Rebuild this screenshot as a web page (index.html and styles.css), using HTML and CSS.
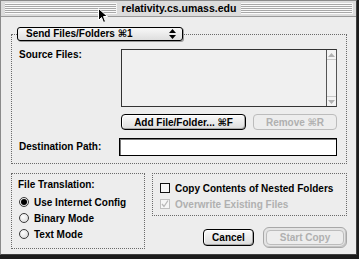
FILE: index.html
```html
<!DOCTYPE html>
<html lang="en">
<head>
    <meta charset="UTF-8">
    <title>relativity.cs.umass.edu</title>
    <link rel="stylesheet" href="styles.css">
</head>
<body>
    <div class="window">
        <div class="titlebar">
            <div class="grip"></div>
            <div class="title">relativity.cs.umass.edu</div>
            <div class="grip"></div>
        </div>

        <div class="content">
            <div class="group send">
                <div class="popup">
                    <span>Send Files/Folders &#8984;1</span>
                    <svg class="popup-arrows" width="7" height="10" viewBox="0 0 7 10">
                        <path d="M3.5 0 L7 4 L0 4 Z M0 6 L7 6 L3.5 10 Z" fill="#000"/>
                    </svg>
                </div>

                <div class="send-grid">
                    <div class="label top">Source Files:</div>
                    <div class="list">
                        <div class="list-area"></div>
                        <div class="scroll">
                            <div class="scroll-btn">
                                <svg width="7" height="4" viewBox="0 0 7 4"><path d="M3.5 0 L7 4 L0 4 Z" fill="#b0b0b0"/></svg>
                            </div>
                            <div class="scroll-track"></div>
                            <div class="scroll-btn">
                                <svg width="7" height="4" viewBox="0 0 7 4"><path d="M0 0 L7 0 L3.5 4 Z" fill="#b0b0b0"/></svg>
                            </div>
                        </div>
                    </div>

                    <div></div>
                    <div class="list-buttons">
                        <button class="btn add">Add File/Folder... &#8984;F</button>
                        <button class="btn remove" disabled>Remove &#8984;R</button>
                    </div>

                    <div class="label">Destination Path:</div>
                    <div class="field"></div>
                </div>
            </div>

            <div class="lower">
                <div class="group translation">
                    <div class="label">File Translation:</div>
                    <label class="option"><span class="radio on"></span>Use Internet Config</label>
                    <label class="option"><span class="radio"></span>Binary Mode</label>
                    <label class="option"><span class="radio"></span>Text Mode</label>
                </div>

                <div class="right-col">
                    <div class="group options">
                        <label class="option"><span class="check"></span>Copy Contents of Nested Folders</label>
                        <label class="option disabled">
                            <span class="check">
                                <svg width="8" height="8" viewBox="0 0 8 8"><path d="M1 4 L3 6.5 L7 0.5" fill="none" stroke="#b8b8b8" stroke-width="1.3"/></svg>
                            </span>Overwrite Existing Files
                        </label>
                    </div>

                    <div class="actions">
                        <button class="btn cancel">Cancel</button>
                        <div class="default-ring">
                            <button class="btn start" disabled>Start Copy</button>
                        </div>
                    </div>
                </div>
            </div>
        </div>

        <svg class="cursor" width="11" height="16" viewBox="0 0 11 16">
            <path d="M0.5 0.5 L0.5 12.5 L3.5 9.5 L5.5 14.5 L7.5 13.5 L5.5 8.5 L9.5 8.5 Z" fill="#000" stroke="#fff" stroke-width="1"/>
        </svg>
    </div>
</body>
</html>
```

FILE: styles.css
```css
:root {
    --face: #ededed;
    --dots: #6a6a6a;
    --dim: #b0b0b0;
}

body {
    margin: 0;
    background: #1c1c1c;
    font-family: 'Liberation Sans', 'DejaVu Sans', sans-serif;
    font-size: 10px;
    font-weight: bold;
    color: #000;
}

.window {
    position: relative;
    width: 357px;
    height: 255px;
    box-sizing: border-box;
    background: var(--face);
    border: 1px solid #8a8a8a;
    border-right-color: #404040;
    border-bottom-color: #404040;
}

/* title bar */

.titlebar {
    height: 15px;
    display: flex;
    align-items: center;
    gap: 5px;
    padding: 0 3px 0 4px;
    background: #dcdcdc;
    border-bottom: 1px solid #9a9a9a;
}

.grip {
    flex: 1;
    height: 11px;
    background: repeating-linear-gradient(#fbfbfb 0 1px, #a8a8a8 1px 2px);
    border-right: 1px solid #f4f4f4;
}

.title {
    font-size: 10.5px;
    line-height: 15px;
}

/* group boxes */

.content {
    padding: 17px 9px 0 10px;
}

.group {
    border: 1px dotted var(--dots);
}

.send {
    padding: 0 9px 8px 7px;
}

.popup {
    width: 166px;
    height: 14px;
    box-sizing: border-box;
    margin: -8px 0 0 -2px;
    display: flex;
    align-items: center;
    justify-content: space-between;
    padding: 0 6px 0 8px;
    border: 1px solid #000;
    border-radius: 3px;
    background: linear-gradient(#f8f8f8, #dedede);
    box-shadow: 1px 1px 0 #9a9a9a;
    line-height: 12px;
}

.send-grid {
    margin-top: 8px;
    display: grid;
    grid-template-columns: 102px 1fr;
    grid-template-rows: 58px 16px 18px;
    row-gap: 7px;
    align-items: center;
}

.send-grid .field {
    margin-top: 1px;
}

.label.top {
    align-self: start;
    line-height: 11px;
}

.list {
    height: 58px;
    box-sizing: border-box;
    display: flex;
    border: 1px solid #333;
    border-right-color: #555;
    background: #f0f0f0;
}

.list-area {
    flex: 1;
}

.scroll {
    width: 9px;
    display: flex;
    flex-direction: column;
    border-left: 1px solid #555;
    background: #f3f3f3;
}

.scroll-btn {
    height: 9px;
    display: flex;
    align-items: center;
    justify-content: center;
}

.scroll-btn:first-child {
    border-bottom: 1px solid #c8c8c8;
}

.scroll-btn:last-child {
    border-top: 1px solid #c8c8c8;
}

.scroll-track {
    flex: 1;
}

.list-buttons {
    display: flex;
    justify-content: space-between;
}

.field {
    height: 18px;
    margin-left: -2px;
    box-sizing: border-box;
    border: 1px solid #000;
    background: #fff;
    box-shadow: inset 1px 1px 0 #777;
}

/* buttons */

.btn {
    height: 16px;
    padding: 0;
    font: inherit;
    color: #000;
    border: 1px solid #000;
    border-radius: 4px;
    background: linear-gradient(#fafafa, #dcdcdc);
    box-shadow: inset -1px -1px 0 #a8a8a8, inset 1px 1px 0 #fff;
}

.btn:disabled {
    color: var(--dim);
    border-color: #bcbcbc;
    background: var(--face);
    box-shadow: none;
}

.add {
    width: 125px;
}

.remove {
    width: 84px;
}

/* lower half */

.lower {
    margin-top: 9px;
    display: grid;
    grid-template-columns: 134px 195px;
    column-gap: 7px;
    align-items: start;
}

.translation {
    height: 76px;
    box-sizing: border-box;
    padding: 5px 0 0 6px;
}

.translation .label {
    line-height: 12px;
    margin-bottom: 3px;
}

.option {
    display: flex;
    align-items: center;
    gap: 5px;
    height: 16px;
}

.translation .option {
    padding-left: 1px;
}

.radio {
    width: 10px;
    height: 10px;
    box-sizing: border-box;
    border-radius: 50%;
    border: 1px solid #3a3a3a;
    background: radial-gradient(circle at 40% 35%, #fff, #d4d4d4);
    display: flex;
    align-items: center;
    justify-content: center;
}

.radio.on::after {
    content: '';
    width: 6px;
    height: 6px;
    border-radius: 50%;
    background: #000;
}

.options {
    height: 43px;
    box-sizing: border-box;
    padding: 6px 0 0 7px;
}

.check {
    width: 10px;
    height: 10px;
    box-sizing: border-box;
    border: 1px solid #111;
    background: #f6f6f6;
    display: flex;
    align-items: center;
    justify-content: center;
}

.disabled {
    color: var(--dim);
}

.disabled .check {
    border-color: #c0c0c0;
}

.actions {
    margin-top: 11px;
    display: flex;
    justify-content: flex-end;
    align-items: center;
    gap: 9px;
}

.cancel {
    width: 51px;
    height: 17px;
}

.default-ring {
    width: 84px;
    height: 21px;
    box-sizing: border-box;
    padding: 1px;
    border: 1px solid #a8a8a8;
    border-radius: 6px;
    background: #e4e4e4;
    box-shadow: inset -1px -1px 0 #c4c4c4;
}

.start {
    width: 78px;
    height: 15px;
    margin: 1px;
    border-color: #bcbcbc;
}

.cursor {
    position: absolute;
    left: 97px;
    top: 7px;
}
```
